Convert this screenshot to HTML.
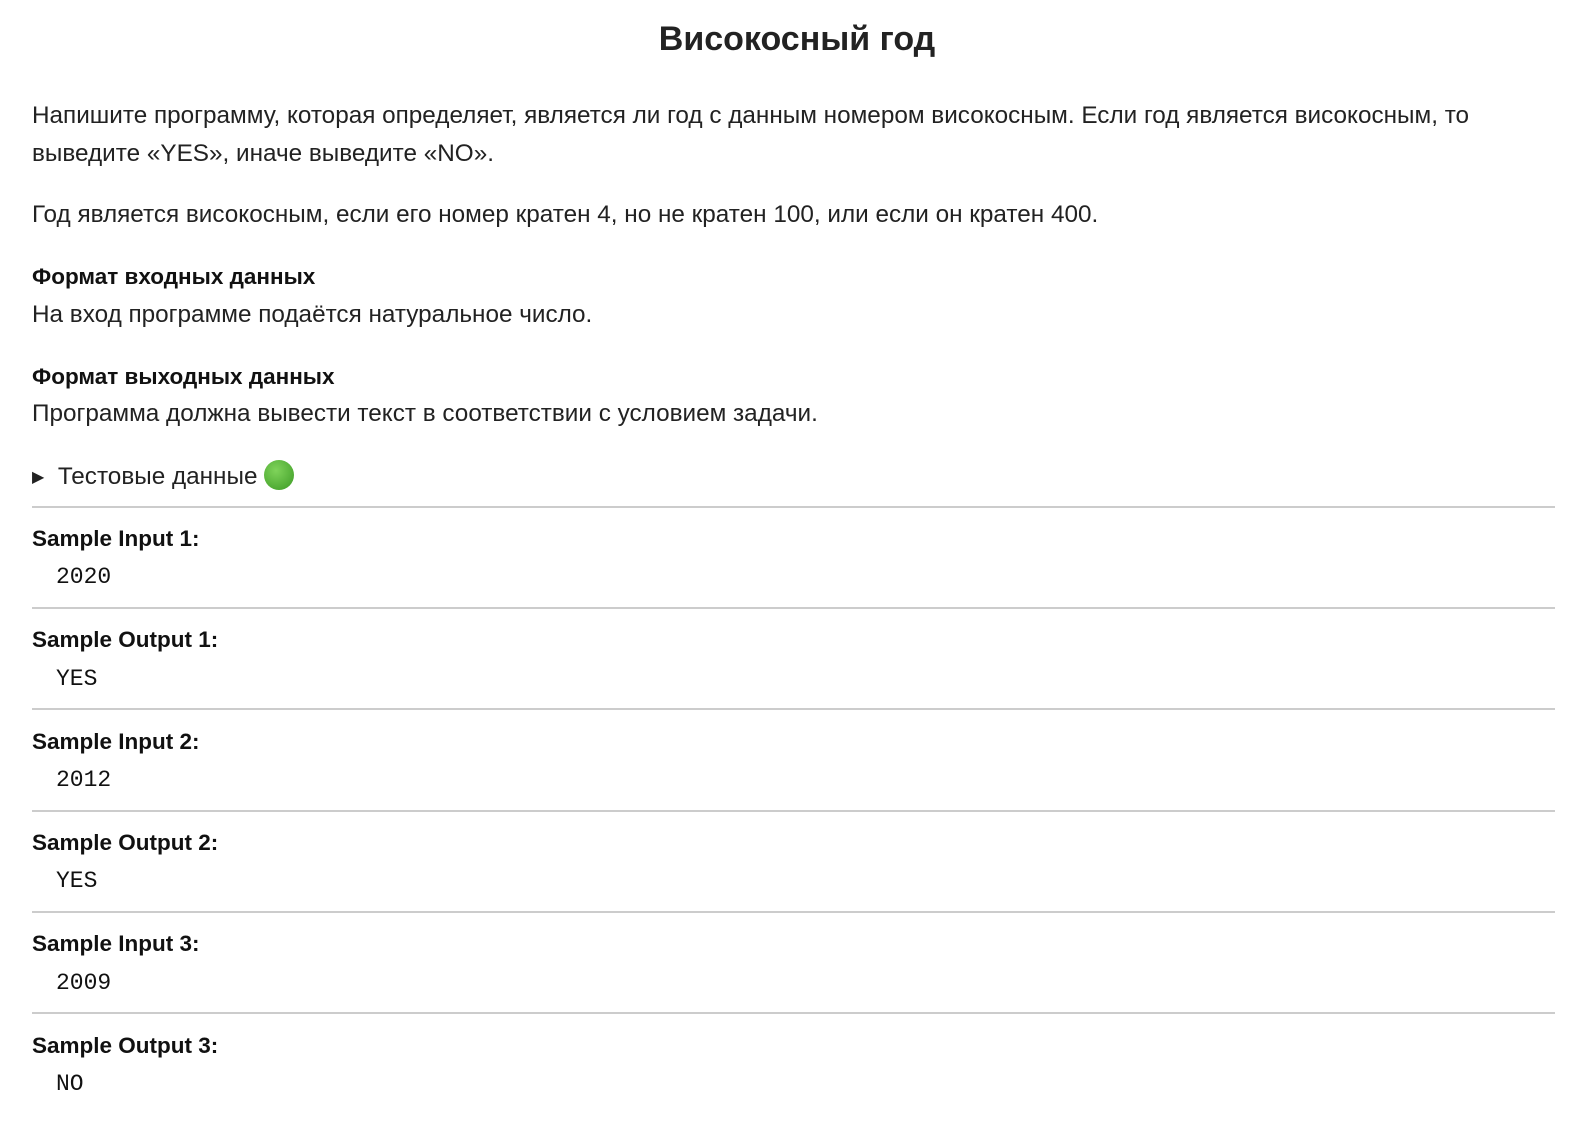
<!DOCTYPE html>
<html><head><meta charset="utf-8"><style>
body{margin:0;width:1578px;height:1126px;background:#fff;font-family:"Liberation Sans",sans-serif;color:#222;position:relative;overflow:hidden}
.a{position:absolute;left:32px;white-space:nowrap;font-size:24.3px;line-height:30px}
.b{font-weight:bold;color:#111;font-size:22.5px}
.s{font-weight:bold;color:#111;font-size:22.5px}
.m{font-family:"Liberation Mono",monospace;font-size:23px;left:56px;color:#111}
.hr{position:absolute;left:32px;width:1523px;height:2px;background:#ccc}
h1{position:absolute;top:1px;left:0;width:1578px;text-align:center;margin:0;font-size:34px;line-height:76px;color:#222;padding-left:16px;box-sizing:border-box}
</style></head><body>
<h1>Високосный год</h1>
<div class="a" style="top:101px">Напишите программу, которая определяет, является ли год с данным номером високосным. Если год является високосным, то</div>
<div class="a" style="top:139px">выведите «YES», иначе выведите «NO».</div>
<div class="a" style="top:200px">Год является високосным, если его номер кратен 4, но не кратен 100, или если он кратен 400.</div>
<div class="a b" style="top:262px">Формат входных данных</div>
<div class="a" style="top:300px">На вход программе подаётся натуральное число.</div>
<div class="a b" style="top:362px">Формат выходных данных</div>
<div class="a" style="top:399px">Программа должна вывести текст в соответствии с условием задачи.</div>
<div class="a" style="top:460px"><span style="font-size:16px;position:relative;top:-2px">▶</span>&nbsp; Тестовые данные <span style="display:inline-block;width:30px;height:30px;border-radius:50%;background:radial-gradient(circle at 40% 35%,#7fd35a,#3b9a24);vertical-align:-6px"></span></div>
<div class="hr" style="top:506px"></div>
<div class="a s" style="top:524px">Sample Input 1:</div><div class="a m" style="top:562px">2020</div>
<div class="hr" style="top:607px"></div>
<div class="a s" style="top:625px">Sample Output 1:</div><div class="a m" style="top:664px">YES</div>
<div class="hr" style="top:708px"></div>
<div class="a s" style="top:727px">Sample Input 2:</div><div class="a m" style="top:765px">2012</div>
<div class="hr" style="top:810px"></div>
<div class="a s" style="top:828px">Sample Output 2:</div><div class="a m" style="top:866px">YES</div>
<div class="hr" style="top:911px"></div>
<div class="a s" style="top:929px">Sample Input 3:</div><div class="a m" style="top:968px">2009</div>
<div class="hr" style="top:1012px"></div>
<div class="a s" style="top:1031px">Sample Output 3:</div><div class="a m" style="top:1069px">NO</div>
</body></html>
